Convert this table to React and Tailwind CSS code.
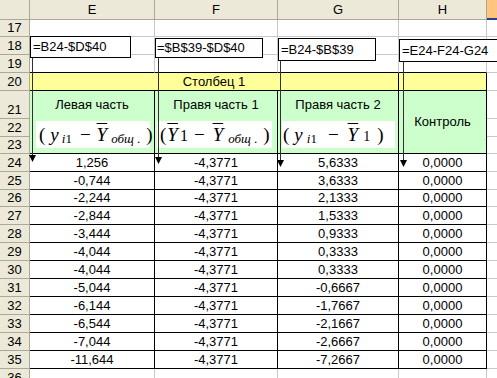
import React from 'react';

// Sheet geometry: row header + columns E, F, G, H and a sliver of I
const hdrCell = 'bg-[#ECE9D8] border-r border-b border-[#ACA899] flex justify-center text-[13px] leading-[15px] text-black';
const gridCell = 'border-r border-b border-[#C8C8C8]';
const dataCell = 'border-r border-b border-black flex items-end justify-center pb-[1px] text-[13px] leading-[15px]';

const data = [
  [24, '1,256', '5,6333'],
  [25, '-0,744', '3,6333'],
  [26, '-2,244', '2,1333'],
  [27, '-2,844', '1,5333'],
  [28, '-3,444', '0,9333'],
  [29, '-4,044', '0,3333'],
  [30, '-4,044', '0,3333'],
  [31, '-5,044', '-0,6667'],
  [32, '-6,144', '-1,7667'],
  [33, '-6,544', '-2,1667'],
  [34, '-7,044', '-2,6667'],
  [35, '-11,644', '-7,2667'],
];

function RowHead({ n }) {
  return <div className={`${hdrCell} items-end pb-[1px]`}>{n}</div>;
}

// plain empty row of the sheet (rows 17, 18, 19, 36)
function BlankRow({ n, boldBottom }) {
  const edge = boldBottom ? 'border-b-black' : '';
  return (
    <>
      <RowHead n={n} />
      <div className={`${gridCell} ${edge}`} />
      <div className={`${gridCell} ${edge}`} />
      <div className={`${gridCell} ${edge}`} />
      <div className={`${gridCell} ${edge}`} />
      <div className="border-b border-[#C8C8C8]" />
    </>
  );
}

function HeadCell({ label, formula, box }) {
  return (
    <div className="row-span-3 bg-[#CCFFCC] border-r border-b border-black flex flex-col">
      <div className="h-[28px] flex items-center justify-center text-[13px]">{label}</div>
      <div className={`bg-white h-[27px] mt-[2px] flex items-center ${box} font-[family-name:'Liberation_Serif',serif] text-[19px] leading-none whitespace-nowrap`}>
        {formula}
      </div>
    </div>
  );
}

const sub = 'text-[13px] relative top-[4px]';

export default function App() {
  return (
    <div className="relative w-[497px] h-[378px] overflow-hidden bg-white font-[family-name:'Liberation_Sans',Arial,sans-serif] text-black">
      <div className="grid grid-cols-[30px_125px_123px_121px_88px_1fr] grid-rows-[20px_17px_18px_18px_18px_28px_18px_17px_18px_18px_17px_18px_18px_18px_18px_18px_18px_18px_18px_18px_18px]">
        {/* column headers */}
        <div className={`${hdrCell} items-center`} />
        {['E', 'F', 'G', 'H'].map((c) => (
          <div key={c} className={`${hdrCell} items-center`}>{c}</div>
        ))}
        <div className="bg-[#FFC47E] border-b-2 border-[#2B3F8F]" />

        <BlankRow n={17} />
        <BlankRow n={18} />
        <BlankRow n={19} boldBottom />

        {/* row 20 */}
        <RowHead n={20} />
        <div className="col-span-3 bg-[#FFFF99] border-r border-b border-black flex items-end justify-center pb-[1px] text-[13px] leading-[15px]">
          Столбец 1
        </div>
        <div className="bg-[#FFFF99] border-r border-b border-black" />
        <div className="border-b border-[#C8C8C8]" />

        {/* rows 21-23 */}
        <RowHead n={21} />
        <HeadCell
          label="Левая часть"
          box="ml-[6px] mr-[4px] pl-[3px]"
          formula={
            <>
              <span>(</span>
              <span className="italic ml-[5px]">y</span>
              <span className={`${sub} ml-[3px]`}><span className="italic">i</span>1</span>
              <span className="ml-[8px]">−</span>
              <span className="italic overline ml-[6px]">Y</span>
              <span className={`${sub} italic ml-[4px]`}>общ</span>
              <span className={`${sub} ml-[3px]`}>.</span>
              <span className="ml-[6px]">)</span>
            </>
          }
        />
        <HeadCell
          label="Правя часть 1"
          box="ml-[2px] mr-[5px] pl-[3px]"
          formula={
            <>
              <span>(</span>
              <span className="italic overline ml-[1px]">Y</span>
              <span className="text-[16px] relative top-[1px] ml-[2px]">1</span>
              <span className="ml-[6px]">−</span>
              <span className="italic overline ml-[8px]">Y</span>
              <span className={`${sub} italic ml-[5px]`}>общ</span>
              <span className={`${sub} ml-[3px]`}>.</span>
              <span className="ml-[6px]">)</span>
            </>
          }
        />
        <HeadCell
          label="Правя часть 2"
          box="ml-[4px] mr-[3px] pl-[1px]"
          formula={
            <>
              <span>(</span>
              <span className="italic ml-[5px]">y</span>
              <span className={`${sub} ml-[4px]`}><span className="italic">i</span>1</span>
              <span className="ml-[11px]">−</span>
              <span className="italic overline ml-[9px]">Y</span>
              <span className="text-[14px] relative top-[2px] ml-[5px]">1</span>
              <span className="ml-[7px]">)</span>
            </>
          }
        />
        <div className="row-span-3 bg-[#CCFFCC] border-r border-b border-black flex items-center justify-center text-[13px]">
          Контроль
        </div>
        <div className="border-b border-[#C8C8C8]" />
        <RowHead n={22} />
        <div className="border-b border-[#C8C8C8]" />
        <RowHead n={23} />
        <div className="border-b border-[#C8C8C8]" />

        {/* data rows */}
        {data.map(([n, e, g]) => (
          <React.Fragment key={n}>
            <RowHead n={n} />
            <div className={dataCell}>{e}</div>
            <div className={dataCell}>-4,3771</div>
            <div className={dataCell}>{g}</div>
            <div className={dataCell}>0,0000</div>
            <div className="border-b border-[#C8C8C8]" />
          </React.Fragment>
        ))}

        <BlankRow n={36} />
      </div>

      {/* arrows from the formula notes down to row 24 */}
      <svg className="absolute left-0 top-0 pointer-events-none" width="497" height="378">
        <g stroke="#303030" strokeWidth="1">
          <line x1="32.5" y1="57" x2="32.5" y2="156" />
          <line x1="158.5" y1="57" x2="158.5" y2="158" />
          <line x1="280.5" y1="61" x2="280.5" y2="161" />
          <line x1="403.5" y1="62" x2="403.5" y2="161" />
        </g>
        <g fill="#000">
          <polygon points="29,155 36,155 32.5,162" />
          <polygon points="155,157 162,157 158.5,164" />
          <polygon points="277,160 284,160 280.5,167" />
          <polygon points="400,160 407,160 403.5,167" />
        </g>
      </svg>

      {/* formula notes */}
      <div className="absolute left-[30px] top-[36px] w-[101px] h-[22px] bg-white border border-black flex items-center pl-[2px] text-[13px] whitespace-nowrap">
        =B24-$D$40
      </div>
      <div className="absolute left-[155px] top-[38px] w-[108px] h-[20px] bg-white border border-black flex items-center pl-[1px] text-[13px] whitespace-nowrap overflow-hidden">
        =$B$39-$D$40
      </div>
      <div className="absolute left-[278px] top-[38px] w-[98px] h-[23px] bg-white border border-black flex items-center pl-[2px] text-[13px] whitespace-nowrap">
        =B24-$B$39
      </div>
      <div className="absolute left-[399px] top-[39px] w-[110px] h-[23px] bg-white border border-black flex items-center pl-[2px] text-[13px] whitespace-nowrap">
        =E24-F24-G24
      </div>
    </div>
  );
}
